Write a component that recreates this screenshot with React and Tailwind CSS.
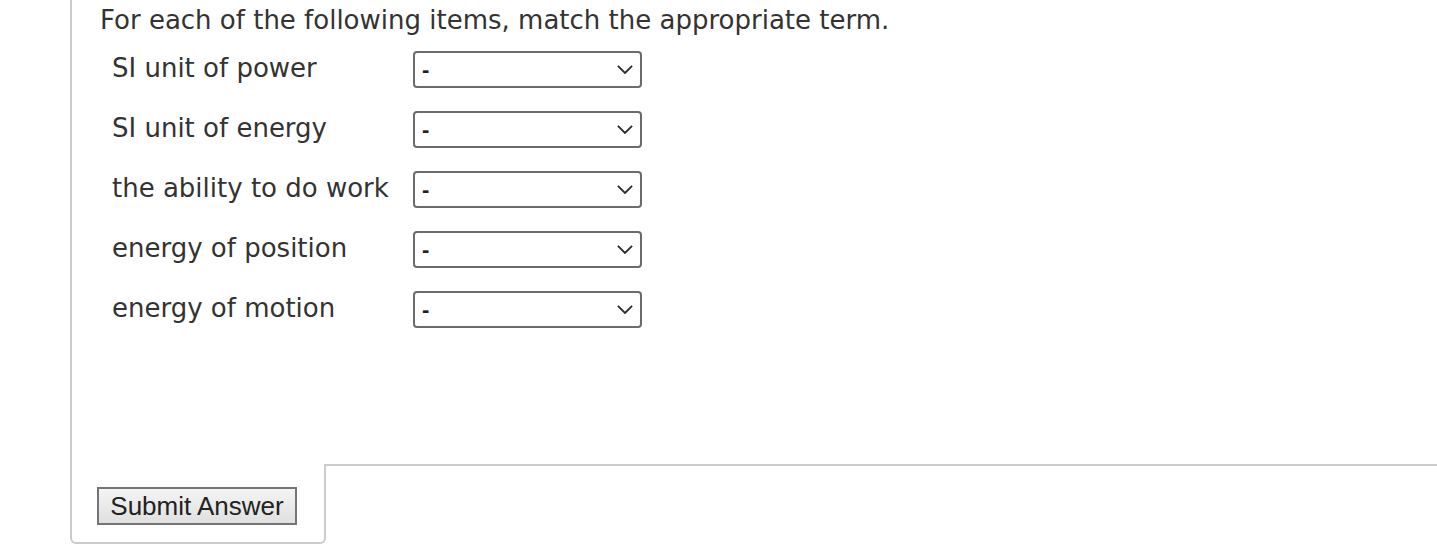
import React from "react";

const items = [
  "SI unit of power",
  "SI unit of energy",
  "the ability to do work",
  "energy of position",
  "energy of motion",
];

const Chevron = () => (
  <svg
    width="16"
    height="9"
    viewBox="0 0 16 9"
    className="pointer-events-none absolute right-[9px] top-[14px]"
  >
    <path d="M0.9 0.9 L8 8 L15.1 0.9" fill="none" stroke="#2a2a2a" strokeWidth="1.8" />
  </svg>
);

const App = () => {
  return (
    <div className="w-[1437px] h-[546px] overflow-hidden bg-white pl-[70px] font-['DejaVu_Sans',Verdana,sans-serif] text-[#333]">
      {/* QUESTION */}
      <div className="h-[464px] border-l-2 border-[#cccccc] pl-[28px] pt-[5px]">
        <p className="text-[26px] leading-[30px]">
          For each of the following items, match the appropriate term.
        </p>

        <div className="mt-[4px] pl-[12px]">
          {items.map((label) => (
            <div key={label} className="flex h-[60px] items-center">
              <span className="-mt-[2px] w-[301px] text-[26px] leading-[30px]">{label}</span>
              <div className="relative">
                <select className="h-[37px] w-[229px] appearance-none rounded-[4px] border-2 border-[#6b6b6b] bg-white pl-[7px] font-['Liberation_Sans',Arial,sans-serif] text-[22px] font-bold leading-[31px] text-[#222]">
                  <option>-</option>
                </select>
                <Chevron />
              </div>
            </div>
          ))}
        </div>
      </div>

      {/* FOOTER */}
      <div className="flex">
        <div className="h-[80px] w-[256px] rounded-bl-[6px] rounded-br-[6px] border-x-2 border-b-2 border-[#cccccc] pl-[25px] pt-[23px]">
          <button className="h-[38px] w-[200px] border-2 border-[#757575] bg-linear-to-b from-[#f4f4f4] to-[#e0e0e0] font-['Liberation_Sans',Arial,sans-serif] text-[26px] leading-[30px] text-[#222]">
            Submit Answer
          </button>
        </div>
        <div className="flex-1 border-t-2 border-[#cccccc]" />
      </div>
    </div>
  );
};

export default App;
